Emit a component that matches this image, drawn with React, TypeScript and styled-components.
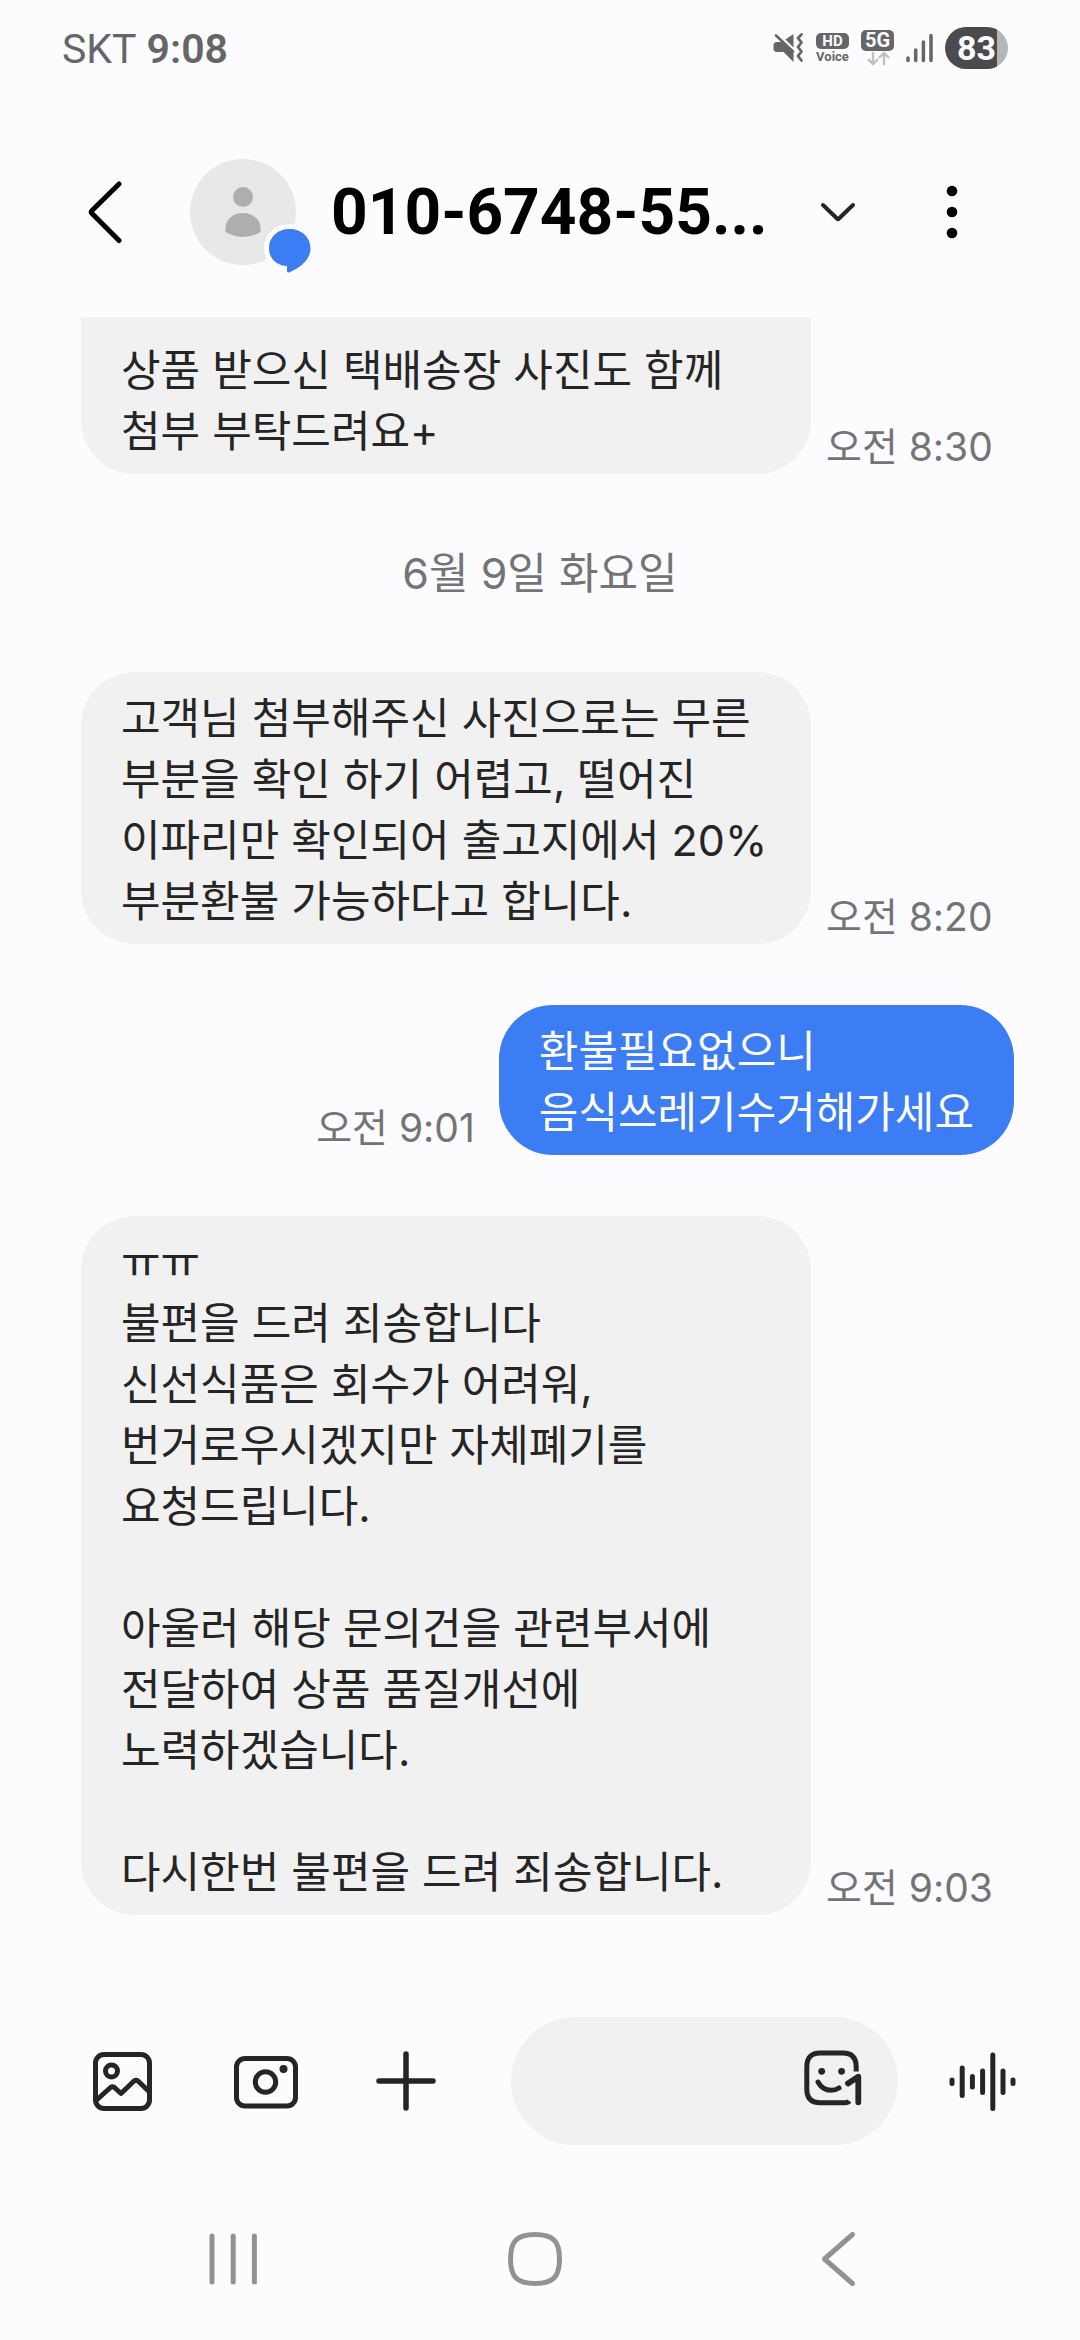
import React from "react";
import styled, { createGlobalStyle } from "styled-components";

const sans = `Inter, "Noto Sans CJK KR", sans-serif`;
const ink = "#252525";
const muted = "#666668";

const GlobalStyle = createGlobalStyle`
  *, *::before, *::after { box-sizing: border-box; }
  body { margin: 0; background: #fcfcfe; font-family: ${sans}; }
  button, input { font: inherit; color: inherit; }
  svg { display: block; flex: none; }
`;

const Screen = styled.div`
  display: flex;
  flex-direction: column;
  min-height: 100vh;
  background: #fcfcfe;
  color: ${ink};
`;

const StatusBar = styled.div`
  display: flex;
  align-items: center;
  justify-content: space-between;
  height: 96px;
  padding: 0 72px 0 62px;
  color: ${muted};
`;

const Carrier = styled.div`
  padding-top: 2px;
  font-family: Roboto, sans-serif;
  font-size: 41px;
  line-height: 48px;
`;

const Clock = styled.time`
  margin-left: 10px;
  font-weight: 600;
`;

const StatusIcons = styled.div`
  display: flex;
  align-items: center;
  gap: 12px;
`;

const Battery = styled.div`
  width: 63px;
  height: 42px;
  border-radius: 21px;
  background: linear-gradient(90deg, #4b4b4d 52px, #b5b5b7 52px);
  color: #fcfcfe;
  font-family: Roboto, sans-serif;
  font-size: 34px;
  font-weight: 700;
  line-height: 42px;
  text-align: center;
`;

const BadgeStack = styled.div`
  display: flex;
  flex-direction: column;
  align-items: center;
`;

const Badge = styled.span<{ $size: number }>`
  width: 33px;
  border-radius: 5px;
  background: ${muted};
  color: #fcfcfe;
  font-family: Roboto, sans-serif;
  font-size: ${(p) => p.$size}px;
  font-weight: 700;
  line-height: ${(p) => p.$size + 1}px;
  text-align: center;
`;

const VoiceLabel = styled.span`
  padding-top: 1px;
  font-family: Roboto, sans-serif;
  font-size: 13px;
  font-weight: 700;
  line-height: 14px;
`;

const Header = styled.header`
  display: flex;
  align-items: center;
  height: 221px;
  padding: 11px 120px 0 76px;
  color: #000;
`;

const IconButton = styled.button`
  display: flex;
  flex: none;
  align-items: center;
  justify-content: center;
  padding: 0;
  border: 0;
  background: none;
`;

const Avatar = styled.div`
  flex: none;
  margin-left: 56px;
`;

const Title = styled.h1`
  flex: 1;
  margin: 0 0 0 14px;
  padding-top: 2px;
  font-family: Roboto, sans-serif;
  font-size: 64px;
  font-weight: 700;
  line-height: 76px;
  white-space: nowrap;
`;

const MoreButton = styled(IconButton)`
  width: 16px;
  margin-left: 86px;
`;

const Conversation = styled.main`
  display: flex;
  flex: 1;
  flex-direction: column;
  padding: 0 66px 0 81px;
`;

const MessageRow = styled.div<{ $sent?: boolean }>`
  display: flex;
  align-items: flex-end;
  flex-direction: ${(p) => (p.$sent ? "row-reverse" : "row")};
  gap: ${(p) => (p.$sent ? 24 : 15)}px;
  margin-bottom: 61px;
`;

const Bubble = styled.p<{ $sent?: boolean; $continued?: boolean }>`
  flex: ${(p) => (p.$sent ? "none" : "0 1 730px")};
  margin: 0;
  padding: ${(p) => (p.$continued ? 23 : 16)}px 40px 12px;
  border-radius: ${(p) => (p.$continued ? "0 0 54px 54px" : "54px")};
  background: ${(p) => (p.$sent ? "#3c7df3" : "#f1f1f1")};
  color: ${(p) => (p.$sent ? "#fcfcfe" : ink)};
  font-size: 43px;
  line-height: 61px;
  white-space: pre;
`;

const SentAt = styled.time`
  flex: none;
  font-size: 39px;
  line-height: 54px;
  color: #747476;
`;

const DateLabel = styled.div`
  margin: 10px 0 71px;
  padding-right: 15px;
  font-size: 43px;
  line-height: 56px;
  color: #747476;
  text-align: center;
`;

const Composer = styled.form`
  display: flex;
  align-items: center;
  height: 128px;
  margin-top: 41px;
  padding: 0 62px 0 90px;
`;

const Tools = styled.div`
  display: flex;
  align-items: center;
  gap: 76px;
`;

const InputPill = styled.div`
  display: flex;
  flex: 1;
  align-items: center;
  min-width: 0;
  height: 128px;
  margin: 0 50px 0 73px;
  padding: 0 34px 0 40px;
  border-radius: 64px;
  background: #f1f1f1;
`;

const MessageInput = styled.input`
  flex: 1;
  min-width: 0;
  padding: 0;
  border: 0;
  outline: 0;
  background: none;
  font-size: 43px;
`;

const SystemNav = styled.nav`
  display: flex;
  align-items: center;
  justify-content: space-between;
  height: 196px;
  padding: 32px 221px 0 206px;
`;

type Message = { time: string; text: string; sent?: boolean; continued?: boolean };

const yesterday: Message[] = [
  { time: "오전 8:30", continued: true, text: "상품 받으신 택배송장 사진도 함께\n첨부 부탁드려요+" },
];

const today: Message[] = [
  {
    time: "오전 8:20",
    text: "고객님 첨부해주신 사진으로는 무른\n부분을 확인 하기 어렵고, 떨어진\n이파리만 확인되어 출고지에서 20%\n부분환불 가능하다고 합니다.",
  },
  { time: "오전 9:01", sent: true, text: "환불필요없으니\n음식쓰레기수거해가세요" },
  {
    time: "오전 9:03",
    text: "ㅠㅠ\n불편을 드려 죄송합니다\n신선식품은 회수가 어려워,\n번거로우시겠지만 자체폐기를\n요청드립니다.\n\n아울러 해당 문의건을 관련부서에\n전달하여 상품 품질개선에\n노력하겠습니다.\n\n다시한번 불편을 드려 죄송합니다.",
  },
];

const MessageItem = ({ time, text, sent, continued }: Message) => (
  <MessageRow $sent={sent}>
    <Bubble $sent={sent} $continued={continued}>{text}</Bubble>
    <SentAt>{time}</SentAt>
  </MessageRow>
);

const MutedIcon = () => (
  <svg width="31" height="30" viewBox="0 0 31 30" fill="none" aria-hidden="true">
    <path d="M0.500 12.500Q0.500 9 4 9h4.500L20.500 20v9L10.500 19H4Q0.500 19 0.500 15.500z" fill={muted} />
    <path d="M12.500 6.500L20.500 1v13.500z" fill={muted} />
    <path d="M3 2.500L20 18.500" stroke={muted} strokeWidth="2.600" strokeLinecap="round" />
    <path d="M28.500 1.500L25 5l3.500 4.500L25 14l3.500 4.500L25 23l3.500 4.500" stroke={muted} strokeWidth="2.800" strokeLinecap="round" strokeLinejoin="round" />
  </svg>
);

const App = () => (
  <>
    <GlobalStyle />
    <Screen>
      <StatusBar>
        <Carrier>
          SKT
          <Clock>9:08</Clock>
        </Carrier>
        <StatusIcons>
          <MutedIcon />
          <BadgeStack>
            <Badge $size={15}>HD</Badge>
            <VoiceLabel>Voice</VoiceLabel>
          </BadgeStack>
          <BadgeStack>
            <Badge $size={20}>5G</Badge>
            <svg width="26" height="15" viewBox="0 0 26 15" fill="none" stroke="#c0c0c2" strokeWidth="2.400" aria-hidden="true">
              <path d="M8 1v12M3 8l5 5 5-5M19 14V2M14 7l5-5 5 5" />
            </svg>
          </BadgeStack>
          <svg width="27" height="30" viewBox="0 0 27 30" stroke={muted} strokeWidth="3.500" strokeLinecap="round" aria-hidden="true">
            <path d="M2 25v2.500M9.700 17v10.500M17.400 9v18.500M25 2.500v25" />
          </svg>
          <Battery>83</Battery>
        </StatusIcons>
      </StatusBar>

      <Header>
        <IconButton aria-label="뒤로">
          <svg width="58" height="64" viewBox="0 0 58 64" fill="none" stroke="#000" strokeWidth="5" strokeLinecap="round" strokeLinejoin="round">
            <path d="M43 4L16 30.500Q14.500 32 16 33.500L43 60.500" />
          </svg>
        </IconButton>
        <Avatar>
          <svg width="127" height="126" viewBox="0 0 127 126" aria-hidden="true">
            <circle cx="53" cy="63" r="53" fill="#e8e8e8" />
            <circle cx="53" cy="48" r="10" fill="#aeaeae" />
            <path d="M35.500 79C35.500 70 44 64 53 64S70.500 70 70.500 79v4q-17.500 10-35 0z" fill="#aeaeae" />
            <path
              d="M99.500 80C111.500 80 120.500 88 120.500 99.500C120.500 110 111 118.500 99 123.500Q97 124 97 122V117C86 116.500 79 109 79 99C79 88 87.500 80 99.500 80Z"
              fill="#3c7df3"
              stroke="#fcfcfe"
              strokeWidth="10"
              paintOrder="stroke"
            />
          </svg>
        </Avatar>
        <Title>010-6748-55...</Title>
        <IconButton aria-label="자세히">
          <svg width="40" height="24" viewBox="0 0 40 24" fill="none" stroke={ink} strokeWidth="4" strokeLinecap="round" strokeLinejoin="round">
            <path d="M5 5l14 13.500q1 1 2 0L35 5" />
          </svg>
        </IconButton>
        <MoreButton aria-label="더보기">
          <svg width="12" height="54" viewBox="0 0 12 54">
            <circle cx="6" cy="6" r="5.300" />
            <circle cx="6" cy="27" r="5.300" />
            <circle cx="6" cy="48" r="5.300" />
          </svg>
        </MoreButton>
      </Header>

      <Conversation>
        {yesterday.map((m) => <MessageItem key={m.time} {...m} />)}
        <DateLabel>6월 9일 화요일</DateLabel>
        {today.map((m) => <MessageItem key={m.time} {...m} />)}
      </Conversation>

      <Composer onSubmit={(e) => e.preventDefault()}>
        <Tools>
          <IconButton type="button" aria-label="갤러리">
            <svg width="64" height="64" viewBox="0 0 64 64" fill="none" stroke={ink} strokeWidth="5" strokeLinejoin="round">
              <rect x="5.500" y="5.500" width="54" height="54" rx="8.500" />
              <circle cx="21.500" cy="22" r="6" />
              <path d="M6 51.500L20.500 38.500q2-1.500 4 0L31 44.500 44 32q2-1.500 4 0L59 42.500" />
            </svg>
          </IconButton>
          <IconButton type="button" aria-label="카메라">
            <svg width="68" height="64" viewBox="0 0 68 64" fill="none" stroke={ink} strokeWidth="5">
              <rect x="6.500" y="9.500" width="59" height="47.500" rx="8.500" />
              <circle cx="35.500" cy="33" r="10.200" />
              <circle cx="53.500" cy="20" r="4" fill={ink} stroke="none" />
            </svg>
          </IconButton>
          <IconButton type="button" aria-label="더 추가">
            <svg width="64" height="64" viewBox="0 0 64 64" fill="none" stroke={ink} strokeWidth="5.500" strokeLinecap="round">
              <path d="M32 5v54M5 32h54" />
            </svg>
          </IconButton>
        </Tools>
        <InputPill>
          <MessageInput aria-label="메시지" />
          <IconButton type="button" aria-label="스티커">
            <svg width="62" height="64" viewBox="0 0 62 64" fill="none" stroke={ink} strokeWidth="5" strokeLinecap="round" strokeLinejoin="round">
              <path strokeLinecap="butt" d="M54.200 22.500V18Q54.200 4 41 4H18Q4.800 4 4.800 18V40Q4.800 53.700 18 53.700H43Q46 53.700 47.300 52" />
              <path d="M16 33Q20.500 41.300 29 41.300Q33.500 41.300 37 39" />
              <path strokeWidth="5.800" d="M46 34.500L56.300 27.700V53.300" />
              <circle cx="19.700" cy="22.300" r="3.400" fill={ink} stroke="none" />
              <circle cx="39.600" cy="22.300" r="3.400" fill={ink} stroke="none" />
            </svg>
          </IconButton>
        </InputPill>
        <IconButton type="button" aria-label="음성 녹음">
          <svg width="70" height="64" viewBox="0 0 70 64" fill="none" stroke={ink} strokeWidth="5" strokeLinecap="round">
            <path d="M4 31v3.500M14.200 19v27.500M24.400 27.500v10.500M34.600 22v21.500M44.800 6v53.500M55 22v21.500M65 31v3.500" />
          </svg>
        </IconButton>
      </Composer>

      <SystemNav aria-label="시스템">
        <IconButton aria-label="최근 앱">
          <svg width="54" height="58" viewBox="0 0 54 58" fill="none" stroke="#929294" strokeWidth="5" strokeLinecap="round">
            <path d="M6 6v46M27.200 6v46M48.400 6v46" />
          </svg>
        </IconButton>
        <IconButton aria-label="홈">
          <svg width="58" height="58" viewBox="0 0 58 58" fill="none" stroke="#929294" strokeWidth="5">
            <path d="M29 4.500C47 4.500 53.500 11 53.500 29S47 53.500 29 53.500S4.500 47 4.500 29S11 4.500 29 4.500Z" />
          </svg>
        </IconButton>
        <IconButton aria-label="뒤로 가기">
          <svg width="50" height="58" viewBox="0 0 50 58" fill="none" stroke="#929294" strokeWidth="5" strokeLinecap="round" strokeLinejoin="round">
            <path d="M43.500 4.500L15.500 29L43.500 53.500" />
          </svg>
        </IconButton>
      </SystemNav>
    </Screen>
  </>
);

export default App;
